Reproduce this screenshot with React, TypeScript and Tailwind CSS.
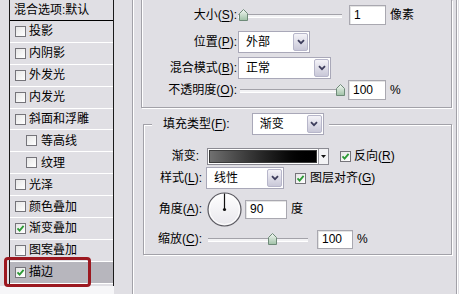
import type { ReactNode } from 'react'

const Check = ({ checked }: { checked?: boolean }) => (
  <span className="flex h-[11px] w-[11px] shrink-0 items-center justify-center border border-[#75747a] bg-gradient-to-br from-[#e6e6e6] to-white">
    {checked && (
      <svg width="9" height="9" viewBox="0 0 9 9">
        <path d="M1.5 4.3 L3.6 6.6 L7.6 1.8" stroke="#2c9a35" strokeWidth="1.8" fill="none" />
      </svg>
    )}
  </span>
)

const Chevron = () => (
  <svg width="8" height="6" viewBox="0 0 8 6">
    <path d="M1 1.2 L4 4.2 L7 1.2" stroke="#3d3d5c" strokeWidth="1.8" fill="none" />
  </svg>
)

const Select = ({ value, className }: { value: string; className: string }) => (
  <div className={`flex h-[22px] shrink-0 border border-[#a9a8b8] bg-white ${className}`}>
    <span className="flex-1 pl-[7px] leading-[20px]">{value}</span>
    <span className="m-[1px] flex w-[15px] items-center justify-center rounded-[2px] border border-[#b7b6ca] bg-gradient-to-b from-[#f4f3f8] to-[#c9c8d8]">
      <Chevron />
    </span>
  </div>
)

const Field = ({ value, className }: { value: string; className: string }) => (
  <div className={`flex shrink-0 items-center border border-[#a9a8b0] bg-white pl-[4px] shadow-[inset_1px_1px_0_#e4e4e4] ${className}`}>
    {value}
  </div>
)

const Slider = ({ className, thumb }: { className: string; thumb: number }) => (
  <div className={`relative h-[14px] shrink-0 ${className}`}>
    <div className="absolute inset-x-0 top-[6px] h-[3px] border-t border-[#a3a2a9] bg-[#f2f2f4] shadow-[0_1px_0_#fff]" />
    <svg className="absolute top-[1px]" style={{ left: thumb }} width="9" height="12" viewBox="0 0 9 12">
      <defs>
        <linearGradient id="th" x1="0" y1="0" x2="0" y2="1">
          <stop offset="0" stopColor="#f4f8f4" />
          <stop offset="1" stopColor="#9fc1a6" />
        </linearGradient>
      </defs>
      <path d="M0.5 4.5 L4.5 0.5 L8.5 4.5 L8.5 11.5 L0.5 11.5 Z" fill="url(#th)" stroke="#6e8a78" />
    </svg>
  </div>
)

const U = ({ children }: { children: ReactNode }) => (
  <span className="underline decoration-1 underline-offset-[2px]">{children}</span>
)

const items: { label: string; indent?: boolean; checked?: boolean; selected?: boolean }[] = [
  { label: '投影' },
  { label: '内阴影' },
  { label: '外发光' },
  { label: '内发光' },
  { label: '斜面和浮雕' },
  { label: '等高线', indent: true },
  { label: '纹理', indent: true },
  { label: '光泽' },
  { label: '颜色叠加' },
  { label: '渐变叠加', checked: true },
  { label: '图案叠加' },
  { label: '描边', checked: true, selected: true },
]

export default function App() {
  return (
    <div className="flex h-[294px] w-[459px] overflow-hidden bg-[#e0dfe4] font-['Liberation_Sans','Noto_Sans_CJK_SC',sans-serif] text-[12px] leading-[14px] text-black">
      {/* style list */}
      <div className="relative flex w-[114px] shrink-0 flex-col pl-[9px]">
        <div className="flex w-[105px] flex-col border-x border-[#1a1a1a]">
          <div className="flex h-[21px] items-center border-b border-black pl-[4px]">混合选项:默认</div>
          {items.map((it) => (
            <div
              key={it.label}
              className={`flex h-[21.9px] items-center gap-[3px] border-b border-white ${it.indent ? 'pl-[16px]' : 'pl-[5px]'} ${it.selected ? 'bg-[#b7b6bd]' : ''}`}
            >
              <Check checked={it.checked} />
              <span className={it.indent ? 'ml-[1px]' : ''}>{it.label}</span>
            </div>
          ))}
          <div className="h-[2px]" />
        </div>
        <div className="-ml-[9px] flex-1 bg-[#f6f6f8]" />
        <div className="absolute left-[4px] top-[257px] h-[30px] w-[87px] rounded-[4px] border-[3px] border-[#9c1820]" />
      </div>

      {/* stroke panel */}
      <div className="ml-[18px] flex w-[325px] shrink-0 flex-col border-x border-[#a2a1a8] pl-[8px] shadow-[inset_1px_0_0_#fff,1px_0_0_#fff]">
        <div className="flex h-[108px] w-[311px] flex-col border-x border-b border-[#a2a1a8] pt-[4px] shadow-[inset_1px_0_0_#fff,1px_1px_0_#fff]">
          <div className="flex h-[22px] items-center">
            <span className="w-[95px] text-right">
              大小(<U>S</U>):
            </span>
            <Slider className="ml-[1px] w-[104px]" thumb={1} />
            <Field value="1" className="ml-[7px] h-[20px] w-[37px]" />
            <span className="ml-[4px]">像素</span>
          </div>
          <div className="mt-[5px] flex h-[22px] items-center">
            <span className="w-[95px] text-right">
              位置(<U>P</U>):
            </span>
            <Select value="外部" className="ml-[1px] w-[72px]" />
          </div>
          <div className="mt-[4px] flex h-[22px] items-center">
            <span className="w-[95px] text-right">
              混合模式(<U>B</U>):
            </span>
            <Select value="正常" className="ml-[1px] w-[93px]" />
          </div>
          <div className="flex h-[21px] items-center">
            <span className="w-[95px] text-right">
              不透明度(<U>O</U>):
            </span>
            <Slider className="ml-[3px] w-[104px]" thumb={96} />
            <Field value="100" className="ml-[4px] h-[20px] w-[38px]" />
            <span className="ml-[4px]">%</span>
          </div>
        </div>

        <fieldset className="ml-[2px] mt-[5px] w-[309px] border border-[#a2a1a8] px-0 pb-[6px] pt-[10px] shadow-[inset_1px_1px_0_#fff,1px_1px_0_#fff]">
          <legend className="ml-[8px] flex items-center bg-[#e0dfe4] pl-[11px] pr-[5px]">
            <span>
              填充类型(<U>F</U>):
            </span>
            <Select value="渐变" className="ml-[22px] w-[72px]" />
          </legend>

          <div className="flex h-[22px] items-center">
            <span className="w-[58px] pr-[3px] text-right">渐变:</span>
            <div className="ml-[5px] flex h-[17px] w-[122px] border border-[#8b8a92] bg-white">
              <div className="m-[1px] flex-1 border border-[#3a3a3a] bg-gradient-to-r from-[#707070] via-[#262626] to-black" />
              <div className="flex w-[10px] items-center justify-center border-l border-[#9d9ca4] bg-[#f3f3f5]">
                <svg width="5" height="3" viewBox="0 0 5 3">
                  <path d="M0 0 H5 L2.5 3 Z" fill="#111" />
                </svg>
              </div>
            </div>
            <span className="ml-[11px]">
              <Check checked />
            </span>
            <span className="ml-[3px]">
              反向(<U>R</U>)
            </span>
          </div>

          <div className="flex h-[22px] items-center">
            <span className="w-[58px] text-right">
              样式(<U>L</U>):
            </span>
            <Select value="线性" className="ml-[4px] w-[78px]" />
            <span className="ml-[11px]">
              <Check checked />
            </span>
            <span className="ml-[4px]">
              图层对齐(<U>G</U>)
            </span>
          </div>

          <div className="mt-[3px] flex h-[34px] items-center">
            <span className="w-[58px] text-right">
              角度(<U>A</U>):
            </span>
            <svg className="ml-[5px] shrink-0" width="35" height="35" viewBox="0 0 35 35">
              <defs>
                <linearGradient id="dial" x1="0" y1="0" x2="0" y2="1">
                  <stop offset="0" stopColor="#ffffff" />
                  <stop offset="1" stopColor="#e8e7ec" />
                </linearGradient>
              </defs>
              <circle cx="17.5" cy="17.5" r="16.5" fill="url(#dial)" stroke="#5a5960" strokeWidth="1.2" />
              <circle cx="17.5" cy="17.5" r="15" fill="none" stroke="#ffffff" strokeWidth="1" />
              <line x1="17.5" y1="1.5" x2="17.5" y2="17.5" stroke="#111" strokeWidth="1.2" />
              <circle cx="17.5" cy="17.5" r="1.6" fill="#111" />
            </svg>
            <Field value="90" className="ml-[3px] h-[19px] w-[42px]" />
            <span className="ml-[4px]">度</span>
          </div>

          <div className="mt-[4px] flex h-[18px] items-center">
            <span className="w-[58px] text-right">
              缩放(<U>C</U>):
            </span>
            <Slider className="ml-[6px] w-[100px]" thumb={60} />
            <Field value="100" className="ml-[9px] h-[19px] w-[36px]" />
            <span className="ml-[4px]">%</span>
          </div>
        </fieldset>
      </div>
    </div>
  )
}
